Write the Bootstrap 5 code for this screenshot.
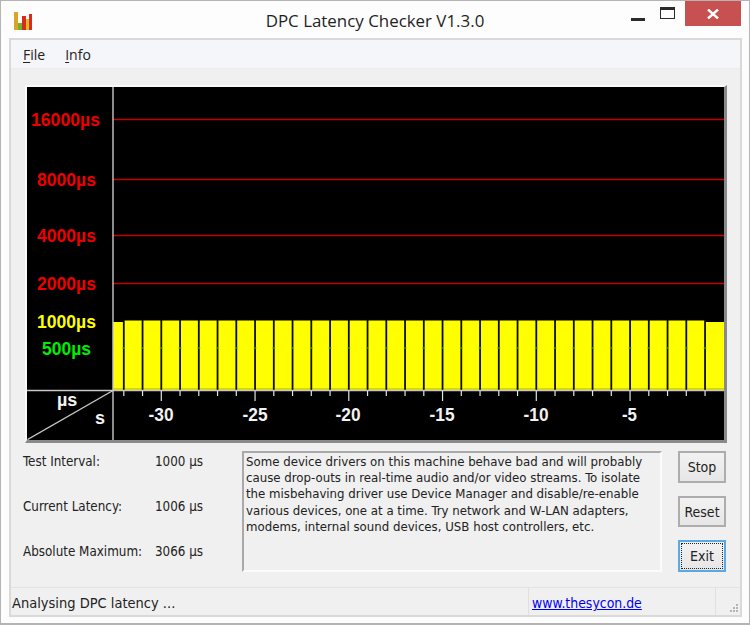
<!DOCTYPE html>
<html lang="en">
<head>
<meta charset="utf-8">
<title>DPC Latency Checker V1.3.0</title>
<link href="https://cdn.jsdelivr.net/npm/bootstrap@5.3.0/dist/css/bootstrap.min.css" rel="stylesheet">
<style>
html,body{margin:0;width:750px;height:625px;overflow:hidden;background:#fff}
body{font-family:"DejaVu Sans Condensed","DejaVu Sans",sans-serif;font-size:13.1px;color:#222;line-height:16.2px}
.win{width:750px;height:625px;background:#fdfdfd;border:1px solid #b4b4b4;border-bottom-width:2px}
.titlebar{height:37px;flex:none;padding:10px 0 0 13px}
.appicon{display:block}
.wintitle{left:0;right:0;top:10px;text-align:center;font-family:"Open Sans",sans-serif;font-size:16.9px;line-height:20px;color:#1f1f1f}
.capbtns{right:8px;top:0}
.capmin{width:14px;height:3px;background:#2b2b2b;margin:17px 15px 0 0}
.capmax{width:15px;height:12px;border:1px solid #2b2b2b;border-top-width:3px;margin:6px 10px 0 0}
.capclose{width:56px;height:25px;background:#c75050}
.client{margin:0 7px 6px 8px;height:579px;border:2px solid #d9d9d9;background:#f0f0f0}
.menubar{height:29px;flex:none;background:#f5f6f9;border-bottom:1px solid #ececec;padding-left:12px;gap:20px;font-family:"Open Sans",sans-serif;font-size:14px}
.menuitem{color:#222;padding-top:7px}
.menuitem u{text-underline-offset:2px}
.scope{margin:16px 0 0 14px;width:702px;height:358px;border:2px solid #fafafa;border-right:3px solid #8a8a8a;border-bottom:3px solid #8a8a8a;background:#000;flex:none}
.scope svg{display:block}
.axlab{font-family:"Liberation Sans",Arial,sans-serif;font-weight:700;font-size:17.5px}
.tick{font-family:"Liberation Sans",Arial,sans-serif;font-weight:700;font-size:18px;fill:#f2f2f2}
.info{margin:8px 0 0 0;height:121px;flex:none}
.stats{width:217px;padding:3px 0 0 12px;gap:29px;flex:none;font-size:13.3px}
.statrow{height:16px;white-space:nowrap}
.statlab{width:132px}
.descr{margin-left:14px;width:420px;height:121px;border:2px solid;border-color:#a9a9a9 #fbfbfb #fbfbfb #a9a9a9;padding:1px 2px;flex:none;background:#f0f0f0}
.btncol{margin-left:16px;gap:13px;flex:none}
.winbtn{width:48px;height:32px;padding:0;font-size:14px;line-height:1;color:#222;border:2px solid #adadad;border-radius:0;background:linear-gradient(#f2f2f2,#e6e6e6)}
.winbtn.focused{border-color:#5aa9e6;outline:1px dotted #222;outline-offset:-4px}
.statusbar{margin-top:15px;height:28px;border-top:1px solid #e2e2e2;font-size:14.5px}
.stcell1{width:517px;padding:7px 0 0 1px}
.stcell2{width:188px;padding:7px 0 0 3px;border-left:1px solid #e0e0e0;border-right:1px solid #e0e0e0;font-size:13.9px}
.stlink{color:#0000f0}
.grip{flex:1;position:relative}
.grip svg{position:absolute;right:1px;bottom:0}
</style>
</head>
<body>
<div class="win position-relative">
  <div class="titlebar position-relative">
    <svg class="appicon" width="20" height="20" viewBox="0 0 20 20">
      <rect x="0" y="1" width="4" height="18" fill="#dca32b"/>
      <rect x="4" y="12" width="4" height="7" fill="#6fb52c"/>
      <rect x="8" y="5" width="4" height="14" fill="#d92a22"/>
      <rect x="12" y="8" width="3" height="11" fill="#d9c021"/>
      <rect x="15" y="3" width="3" height="16" fill="#dc2a22"/>
    </svg>
    <div class="wintitle position-absolute">DPC Latency Checker V1.3.0</div>
    <div class="capbtns position-absolute d-flex align-items-start">
      <div class="capmin"></div>
      <div class="capmax"></div>
      <div class="capclose d-flex align-items-center justify-content-center">
        <svg width="12" height="10" viewBox="0 0 12 10"><path d="M1 0.5 L11 9.5 M11 0.5 L1 9.5" stroke="#fff" stroke-width="2.4"/></svg>
      </div>
    </div>
  </div>
  <div class="client d-flex flex-column">
    <div class="menubar d-flex">
      <span class="menuitem"><u>F</u>ile</span>
      <span class="menuitem"><u>I</u>nfo</span>
    </div>
    <div class="scope">
      <svg width="697" height="353" viewBox="27 87 697 353">
        <rect x="27" y="87" width="697" height="353" fill="#000"/>
        <path stroke="#c40000" stroke-width="1.4" fill="none" d="M113 119.5H724M113 179.5H724M113 235.5H724M113 283.5H724"/>
        <g fill="#ffff00">
          <rect x="113" y="322" width="11" height="68"/>
          <rect x="124" y="320.5" width="582" height="69.5"/>
          <rect x="706" y="322" width="18" height="68"/>
        </g>
        <rect x="113" y="388" width="611" height="2" fill="#d8d800"/>
        <g id="barlines" stroke="#0c0c00" stroke-width="1.8"></g>
        <g id="greens" fill="#44cc00"></g>
        <g stroke="#c8c8c8" stroke-width="1.4">
          <path d="M113 87V440M27 390.5H724"/>
          <path d="M27.5 439.5L113 390.5"/>
        </g>
        <g id="ticks" stroke="#e4e4e4" stroke-width="1.2"></g>
        <text class="axlab" x="31" y="125.5" fill="#ee0000" textLength="69" lengthAdjust="spacingAndGlyphs">16000µs</text>
        <text class="axlab" x="37" y="185.5" fill="#ee0000" textLength="59" lengthAdjust="spacingAndGlyphs">8000µs</text>
        <text class="axlab" x="37" y="241.5" fill="#ee0000" textLength="59" lengthAdjust="spacingAndGlyphs">4000µs</text>
        <text class="axlab" x="37" y="289.5" fill="#ee0000" textLength="59" lengthAdjust="spacingAndGlyphs">2000µs</text>
        <text class="axlab" x="37" y="328" fill="#ffff00" textLength="59" lengthAdjust="spacingAndGlyphs">1000µs</text>
        <text class="axlab" x="42" y="354.5" fill="#00ee00" textLength="49" lengthAdjust="spacingAndGlyphs">500µs</text>
        <text class="tick" x="57" y="406">µs</text>
        <text class="tick" x="95" y="424">s</text>
        <text class="tick" x="148.5" y="421" textLength="25" lengthAdjust="spacingAndGlyphs">-30</text>
        <text class="tick" x="242.5" y="421" textLength="25" lengthAdjust="spacingAndGlyphs">-25</text>
        <text class="tick" x="335.5" y="421" textLength="25" lengthAdjust="spacingAndGlyphs">-20</text>
        <text class="tick" x="429.5" y="421" textLength="25" lengthAdjust="spacingAndGlyphs">-15</text>
        <text class="tick" x="523.5" y="421" textLength="25" lengthAdjust="spacingAndGlyphs">-10</text>
        <text class="tick" x="622" y="421" textLength="15" lengthAdjust="spacingAndGlyphs">-5</text>
      </svg>
    </div>
    <div class="info d-flex">
      <div class="stats d-flex flex-column">
        <div class="statrow d-flex"><span class="statlab">Test Interval:</span><span>1000 µs</span></div>
        <div class="statrow d-flex"><span class="statlab">Current Latency:</span><span>1006 µs</span></div>
        <div class="statrow d-flex"><span class="statlab">Absolute Maximum:</span><span>3066 µs</span></div>
      </div>
      <div class="descr">Some device drivers on this machine behave bad and will probably cause drop-outs in real-time audio and/or video streams. To isolate the misbehaving driver use Device Manager and disable/re-enable various devices, one at a time. Try network and W-LAN adapters, modems, internal sound devices, USB host controllers, etc.</div>
      <div class="btncol d-flex flex-column">
        <button type="button" class="btn winbtn">Stop</button>
        <button type="button" class="btn winbtn">Reset</button>
        <button type="button" class="btn winbtn focused">Exit</button>
      </div>
    </div>
    <div class="statusbar d-flex">
      <div class="stcell1">Analysing DPC latency ...</div>
      <div class="stcell2"><a class="stlink" href="#">www.thesycon.de</a></div>
      <div class="grip">
        <svg width="12" height="12" viewBox="0 0 12 12" fill="#b4b4b4"><rect x="9" y="1" width="2" height="2"/><rect x="6" y="4" width="2" height="2"/><rect x="9" y="4" width="2" height="2"/><rect x="3" y="7" width="2" height="2"/><rect x="6" y="7" width="2" height="2"/><rect x="9" y="7" width="2" height="2"/></svg>
      </div>
    </div>
  </div>
</div>
<script src="https://cdn.jsdelivr.net/npm/bootstrap@5.3.0/dist/js/bootstrap.bundle.min.js"></script>
<script>
var NS="http://www.w3.org/2000/svg";
function add(p,n,a){var e=document.createElementNS(NS,n);for(var k in a)e.setAttribute(k,a[k]);document.getElementById(p).appendChild(e);}
for(var i=0;i<32;i++){
  var x=123.8+i*18.75;
  if(x>712)break;
  add("barlines","line",{x1:x,x2:x,y1:320,y2:390});
  add("greens","rect",{x:x-1.5,y:347.5,width:3,height:1});
  var major=Math.round((x-161)/18.75)%5===0;
  add("ticks","line",{x1:x,x2:x,y1:391,y2:major?401:396});
}
</script>
</body>
</html>
